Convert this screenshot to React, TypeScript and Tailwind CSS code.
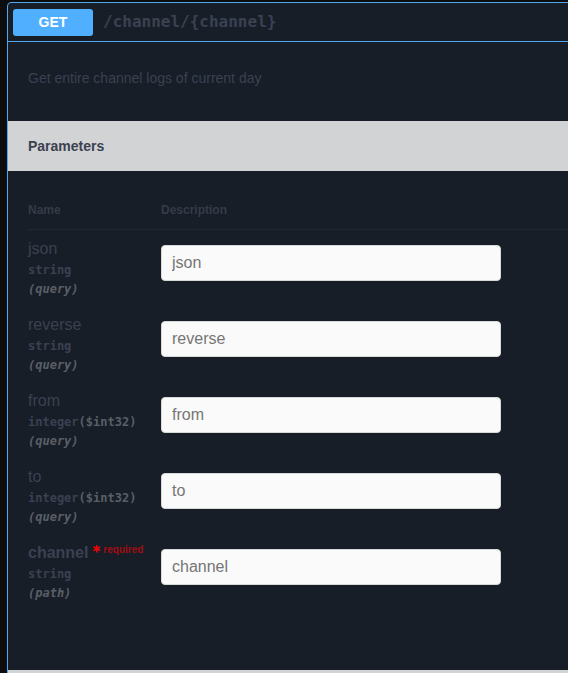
import React from "react";

type Param = {
  name: string;
  type: string;
  format?: string;
  loc: string;
  required?: boolean;
};

const params: Param[] = [
  { name: "json", type: "string", loc: "(query)" },
  { name: "reverse", type: "string", loc: "(query)" },
  { name: "from", type: "integer", format: "($int32)", loc: "(query)" },
  { name: "to", type: "integer", format: "($int32)", loc: "(query)" },
  { name: "channel", type: "string", loc: "(path)", required: true },
];

const sans = "font-['Liberation_Sans',Arial,sans-serif]";
const mono = "font-['DejaVu_Sans_Mono',monospace]";

export default function App() {
  return (
    <div className={`w-[568px] h-[673px] overflow-hidden bg-[#0d0d0d] pl-[7px] pt-[2px] ${sans}`}>
      <div className="w-[640px] border border-[#4fa8f0] rounded-[4px] bg-[#171e28]">
        {/* Summary header */}
        <div className="h-[39px] flex items-center pl-[5px] border-b border-[#4fa8f0]">
          <div className="w-[80px] h-[27px] rounded-[3px] bg-[#50b0ff] flex items-center justify-center text-white text-[14px] font-bold">
            GET
          </div>
          <span className={`ml-[10px] text-[16px] font-bold text-[#3b4151] ${mono}`}>
            /channel/{"{channel}"}
          </span>
        </div>

        {/* Description */}
        <div className="h-[79px] pt-[28px] pl-[20px]">
          <p className="text-[14px] leading-[16px] text-[#3b4151]">Get entire channel logs of current day</p>
        </div>

        {/* Parameters header */}
        <div className="h-[50px] bg-[#d2d3d5] flex items-center pl-[20px]">
          <span className="text-[14px] font-bold text-[#3b4151]">Parameters</span>
        </div>

        {/* Table */}
        <div className="pt-[20px] pl-[20px]">
          <div className="flex py-[12px] border-b border-[#1f2732] text-[12px] leading-[14px] font-bold text-[#353b48]">
            <div className="w-[133px]">Name</div>
            <div>Description</div>
          </div>
          {params.map((p) => (
            <div key={p.name} className="flex h-[76px] pt-[10px]">
              <div className="w-[133px]">
                <div className={`relative h-[18px] text-[16px] leading-[18px] text-[#3b4151] ${p.required ? "font-bold" : ""}`}>
                  {p.name}
                  {p.required && (
                    <span className="relative top-[-1px] ml-[4px] text-[15px] leading-[0] font-bold text-[#ff0000] font-['DejaVu_Sans',sans-serif]">
                      *
                      <span className={`relative top-[-4px] ml-[3px] text-[10px] font-bold text-[#a20c12] ${sans}`}>required</span>
                    </span>
                  )}
                </div>
                <div className={`py-[5px] text-[12px] leading-[14px] font-bold text-[#3b4151] ${mono}`}>
                  {p.type}
                  {p.format && <span className="text-[#5a5e66]">{p.format}</span>}
                </div>
                <div className={`text-[12px] leading-[14px] font-bold italic text-[#5a5e66] ${mono}`}>{p.loc}</div>
              </div>
              <div className="pt-[5px]">
                <input
                  placeholder={p.name}
                  className={`w-[340px] h-[36px] px-[10px] rounded-[4px] border border-[#d9d9d9] bg-[#fafafa] text-[16px] text-[#3b4151] placeholder:text-[#757575] outline-none ${sans}`}
                />
              </div>
            </div>
          ))}
        </div>
        <div className="h-[60px]" />
        <div className="h-[50px] bg-[#d2d3d5]" />
      </div>
    </div>
  );
}
